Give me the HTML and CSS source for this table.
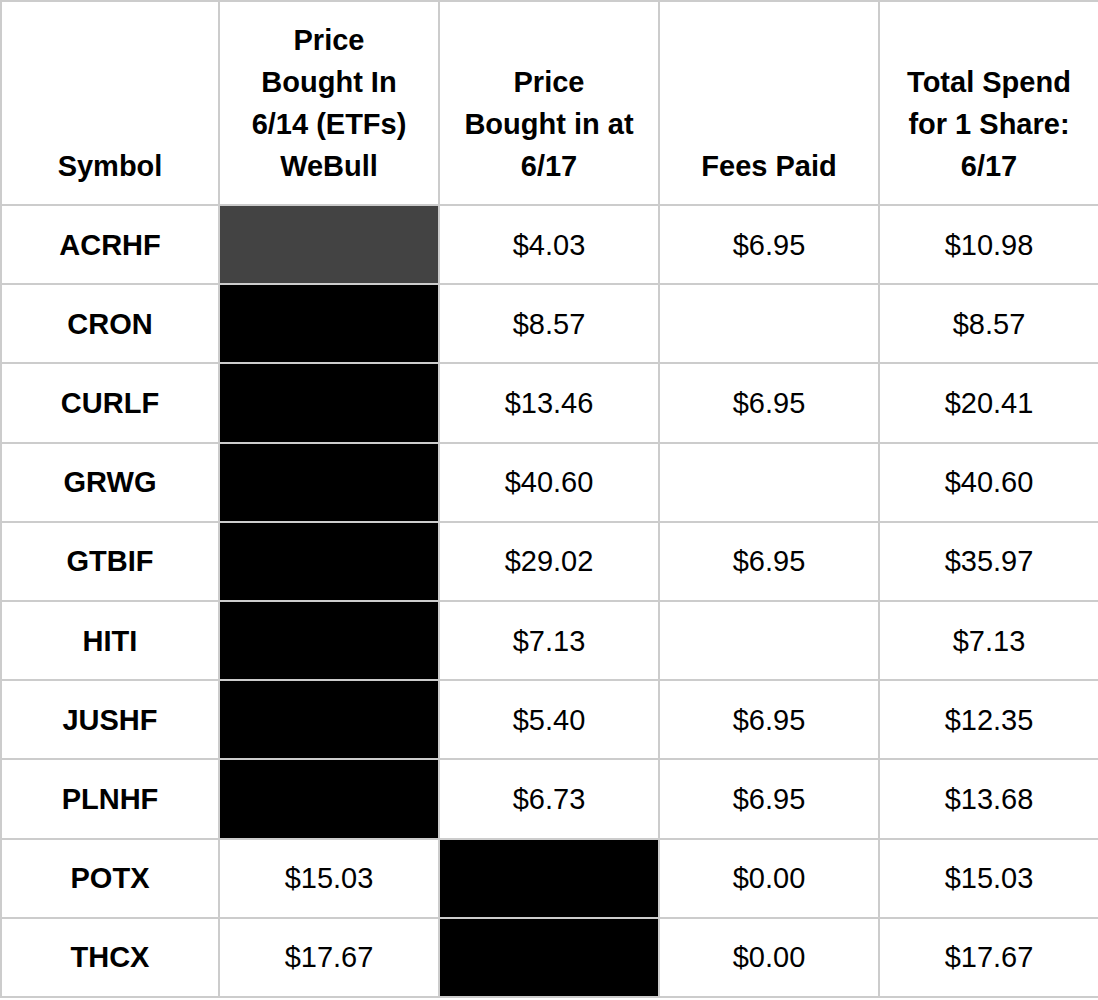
FILE: index.html
```html
<!DOCTYPE html>
<html>
<head>
<meta charset="utf-8">
<link rel="stylesheet" href="styles.css">
</head>
<body>
<div class="sheet">
  <div class="cell head">Symbol</div>
  <div class="cell head">Price<br>Bought In<br>6/14 (ETFs)<br>WeBull</div>
  <div class="cell head">Price<br>Bought in at<br>6/17</div>
  <div class="cell head">Fees Paid</div>
  <div class="cell head">Total Spend<br>for 1 Share:<br>6/17</div>

  <div class="cell sym">ACRHF</div>
  <div class="cell gray"></div>
  <div class="cell">$4.03</div>
  <div class="cell">$6.95</div>
  <div class="cell">$10.98</div>

  <div class="cell sym">CRON</div>
  <div class="cell black"></div>
  <div class="cell">$8.57</div>
  <div class="cell"></div>
  <div class="cell">$8.57</div>

  <div class="cell sym">CURLF</div>
  <div class="cell black"></div>
  <div class="cell">$13.46</div>
  <div class="cell">$6.95</div>
  <div class="cell">$20.41</div>

  <div class="cell sym">GRWG</div>
  <div class="cell black"></div>
  <div class="cell">$40.60</div>
  <div class="cell"></div>
  <div class="cell">$40.60</div>

  <div class="cell sym">GTBIF</div>
  <div class="cell black"></div>
  <div class="cell">$29.02</div>
  <div class="cell">$6.95</div>
  <div class="cell">$35.97</div>

  <div class="cell sym">HITI</div>
  <div class="cell black"></div>
  <div class="cell">$7.13</div>
  <div class="cell"></div>
  <div class="cell">$7.13</div>

  <div class="cell sym">JUSHF</div>
  <div class="cell black"></div>
  <div class="cell">$5.40</div>
  <div class="cell">$6.95</div>
  <div class="cell">$12.35</div>

  <div class="cell sym">PLNHF</div>
  <div class="cell black"></div>
  <div class="cell">$6.73</div>
  <div class="cell">$6.95</div>
  <div class="cell">$13.68</div>

  <div class="cell sym">POTX</div>
  <div class="cell">$15.03</div>
  <div class="cell black"></div>
  <div class="cell">$0.00</div>
  <div class="cell">$15.03</div>

  <div class="cell sym">THCX</div>
  <div class="cell">$17.67</div>
  <div class="cell black"></div>
  <div class="cell">$0.00</div>
  <div class="cell">$17.67</div>
</div>
</body>
</html>
```

FILE: styles.css
```css
html, body {
  margin: 0;
  padding: 0;
  background: #ffffff;
}

.sheet {
  display: grid;
  grid-template-columns: 216px 218px 218px 218px 218px;
  grid-template-rows: 202px repeat(10, 77.2px);
  gap: 2px;
  padding: 2px 0 2px 2px;
  width: 1096px;
  background: #cccccc;
  font-family: "Liberation Sans", Arial, sans-serif;
  font-size: 29px;
  color: #000000;
}

.cell {
  background: #ffffff;
  display: flex;
  align-items: center;
  justify-content: center;
  text-align: center;
  line-height: 42px;
}

.head {
  font-weight: bold;
  align-items: flex-end;
  padding-bottom: 17px;
  box-sizing: border-box;
}

.sym {
  font-weight: bold;
}

.gray {
  background: #434343;
}

.black {
  background: #000000;
}
```
